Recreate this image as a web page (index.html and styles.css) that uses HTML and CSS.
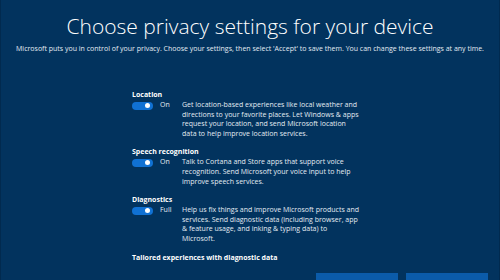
FILE: index.html
```html
<!DOCTYPE html>
<html lang="en">
<head>
    <meta charset="UTF-8">
    <meta name="viewport" content="width=device-width, initial-scale=1.0">
    <title>Choose privacy settings for your device</title>
    <link rel="stylesheet" href="styles.css">
</head>
<body>
    <div class="page">
        <header class="header">
            <h1>Choose privacy settings for your device</h1>
            <p class="intro">Microsoft puts you in control of your privacy. Choose your settings, then select 'Accept' to save them. You can change these settings at any time.</p>
        </header>

        <main class="settings">
            <section class="setting">
                <div class="setting-name">Location</div>
                <div class="setting-row">
                    <div class="toggle"><span class="knob"></span></div>
                    <span class="state">On</span>
                    <p class="desc">Get location-based experiences like local weather and directions to your favorite places. Let Windows &amp; apps request your location, and send Microsoft location data to help improve location services.</p>
                </div>
            </section>

            <section class="setting">
                <div class="setting-name">Speech recognition</div>
                <div class="setting-row">
                    <div class="toggle"><span class="knob"></span></div>
                    <span class="state">On</span>
                    <p class="desc">Talk to Cortana and Store apps that support voice recognition. Send Microsoft your voice input to help improve speech services.</p>
                </div>
            </section>

            <section class="setting">
                <div class="setting-name">Diagnostics</div>
                <div class="setting-row">
                    <div class="toggle"><span class="knob"></span></div>
                    <span class="state">Full</span>
                    <p class="desc">Help us fix things and improve Microsoft products and services. Send diagnostic data (including browser, app &amp; feature usage, and inking &amp; typing data) to<br>Microsoft.</p>
                </div>
            </section>

            <section class="setting">
                <div class="setting-name">Tailored experiences with diagnostic data</div>
            </section>
        </main>

        <footer class="actions">
            <button class="btn" aria-label="Learn more"></button>
            <button class="btn" aria-label="Accept"></button>
        </footer>
    </div>
</body>
</html>
```

FILE: styles.css
```css
:root {
    --bg: #02335e;
    --edge: #012a4f;
    --accent: #1071d3;
    --button: #0b5ba9;
    --text: #ffffff;
    --muted: #e3ebf3;
}

* {
    margin: 0;
    padding: 0;
    box-sizing: border-box;
}

html, body {
    height: 100%;
    overflow: hidden;
}

body {
    font-family: "Open Sans", "Noto Sans", sans-serif;
    background: var(--bg);
    color: var(--text);
}

.page {
    height: 100%;
    border-left: 1px solid var(--edge);
    border-right: 1px solid var(--edge);
    display: flex;
    flex-direction: column;
}

.header {
    text-align: center;
    padding-top: 10px;
}

h1 {
    font-size: 21px;
    font-weight: 300;
    line-height: 32px;
}

.intro {
    font-size: 7px;
    line-height: 10px;
    margin-top: 2px;
    color: var(--muted);
}

.settings {
    width: 236px;
    margin: 36px auto 0;
    display: flex;
    flex-direction: column;
    gap: 9px;
}

.setting-name {
    font-size: 7px;
    font-weight: 700;
    line-height: 10px;
}

.setting-row {
    display: flex;
    align-items: flex-start;
}

.toggle {
    width: 21px;
    height: 8px;
    margin-top: 1.5px;
    border-radius: 4px;
    background: var(--accent);
    position: relative;
    flex-shrink: 0;
}

.knob {
    position: absolute;
    right: 3px;
    top: 1.5px;
    width: 5px;
    height: 5px;
    border-radius: 50%;
    background: #fff;
}

.state {
    width: 29px;
    padding-left: 7px;
    font-size: 7px;
    line-height: 10px;
    flex-shrink: 0;
    color: var(--muted);
}

.desc {
    width: 180px;
    font-size: 7px;
    line-height: 9.6px;
    color: var(--muted);
}

.actions {
    margin-top: auto;
    display: flex;
    justify-content: flex-end;
    gap: 8px;
    padding-right: 11px;
    height: 7px;
    overflow: hidden;
}

.btn {
    width: 82px;
    height: 30px;
    border: none;
    background: var(--button);
}
```
